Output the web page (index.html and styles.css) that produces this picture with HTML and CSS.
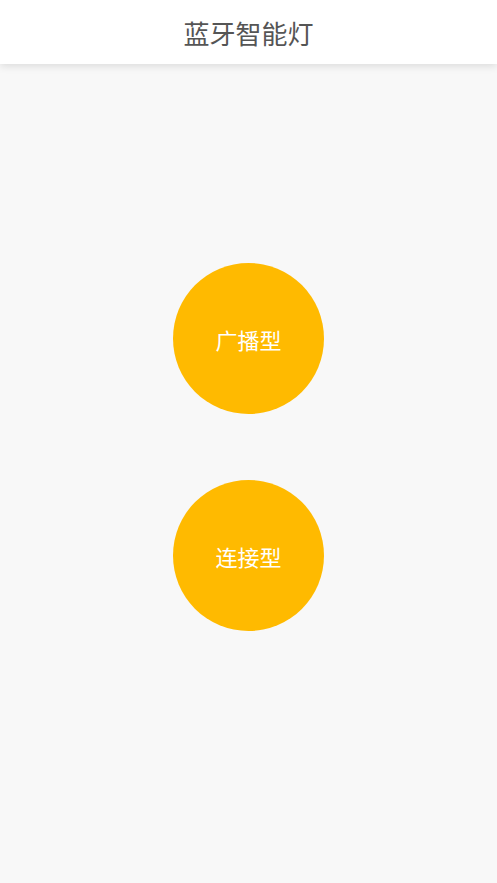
FILE: index.html
```html
<!DOCTYPE html>
<html lang="zh-CN">
<head>
    <meta charset="UTF-8">
    <meta name="viewport" content="width=device-width, initial-scale=1.0">
    <title>蓝牙智能灯</title>
    <link rel="stylesheet" href="styles.css">
</head>
<body>
    <header class="top-bar">蓝牙智能灯</header>
    <div class="modes">
        <button class="mode-btn">广播型</button>
        <button class="mode-btn">连接型</button>
    </div>
</body>
</html>
```

FILE: styles.css
```css
html, body {
    height: 100%;
}

body {
    font-family: "Noto Sans CJK SC", "Noto Sans", sans-serif;
    background-color: #f8f8f8;
    margin: 0;
    padding: 0;
}

.top-bar {
    height: 64px;
    line-height: 66px;
    text-align: center;
    font-size: 26px;
    color: #555555;
    background: #ffffff;
    box-shadow: 0 2px 8px rgba(0, 0, 0, 0.12);
}

.modes {
    display: flex;
    flex-direction: column;
    align-items: center;
    gap: 66px;
    padding-top: 199px;
}

.mode-btn {
    width: 151px;
    height: 151px;
    border-radius: 50%;
    border: none;
    background-color: #ffba00;
    color: #ffffff;
    font-family: inherit;
    font-size: 22px;
    padding: 0;
    cursor: pointer;
}
```
